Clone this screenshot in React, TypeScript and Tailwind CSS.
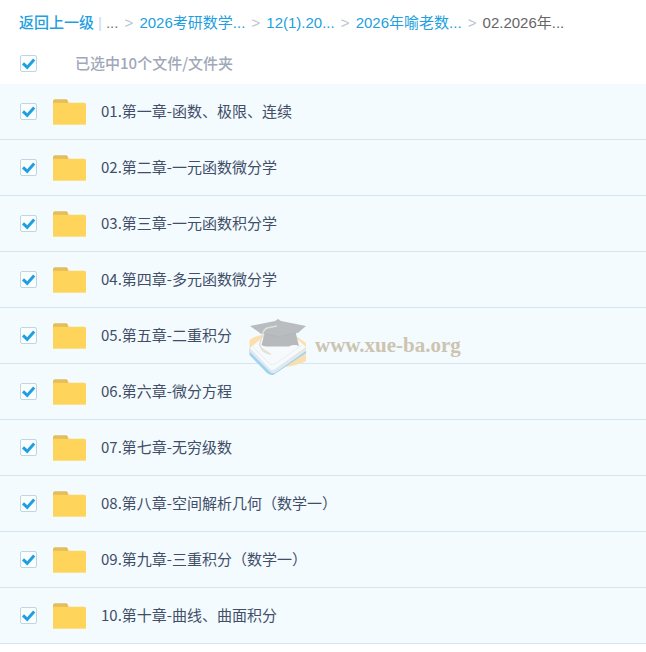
import { useState } from 'react'

const crumbs = ['2026考研数学...', '12(1).20...', '2026年喻老数...']

const folders = [
  '01.第一章-函数、极限、连续',
  '02.第二章-一元函数微分学',
  '03.第三章-一元函数积分学',
  '04.第四章-多元函数微分学',
  '05.第五章-二重积分',
  '06.第六章-微分方程',
  '07.第七章-无穷级数',
  '08.第八章-空间解析几何（数学一）',
  '09.第九章-三重积分（数学一）',
  '10.第十章-曲线、曲面积分',
]

type CheckboxProps = {
  id: string
  checked: boolean
  onChange: () => void
}

function Checkbox({ id, checked, onChange }: CheckboxProps) {
  return (
    <span className="grid h-[18px] w-[17px] shrink-0 place-items-center">
      <input
        id={id}
        type="checkbox"
        checked={checked}
        onChange={onChange}
        className="col-start-1 row-start-1 h-[17px] w-[17px] appearance-none rounded-xs border border-[#c3d5e3] bg-[#fbfeff]"
      />
      {checked && (
        <svg width="17" height="17" viewBox="0 0 17 17" fill="none" className="pointer-events-none col-start-1 row-start-1">
          <path d="M3 8.4 L7.2 12.4 L14.2 4.5" stroke="#1f9fe6" strokeWidth="3" />
        </svg>
      )}
    </span>
  )
}

function FolderIcon() {
  return (
    <svg width="33" height="27" viewBox="0 0 33 27" className="shrink-0">
      <path d="M0 3.2 Q0 1.2 2 1.2 H13 Q14.3 1.2 14.7 2.4 L15.4 4.8 V9 H0 Z" fill="#e3be5a" />
      <rect x="0" y="4.7" width="33" height="22.3" rx="1.6" fill="#ffd45b" />
      <path d="M0.3 26 Q0.7 27 2 27 H31 Q32.3 27 32.7 26 Z" fill="#fde08a" />
    </svg>
  )
}

// Graduation cap resting on a stack of books
function CapLogo() {
  return (
    <svg width="58" height="58" viewBox="0 0 58 58" className="shrink-0">
      <path d="M0.5 22 Q5 18 14 17 H45 L57 25 V43 Q48 48 35 49 L12 45 Q2 40 0.5 32 Z" fill="#fbdfae" />
      <path d="M0.5 31 L22 54 L57 32 V35 L25 56.5 Q22 58 18 55 L0.5 37 Z" fill="#9fd2ee" />
      <path d="M1 30 L21 50 Q23 52 26 50 L57 30 V33 L26 55 Q23 56 21 54 L1 34 Z" fill="#dfe9ef" />
      <path d="M1 30 L13 20 H47 L57 29 L26 51 Q23 53 21 51 Z" fill="#f6fafc" />
      <path d="M4 29 L21 46 Q23 48 26 46 L53 27" fill="none" stroke="#e3ebef" strokeWidth="0.8" />
      <path d="M16 14 L46 12 L50 28 Q45 26 40 28.5 H17 Q14 28 12.5 27 Z" fill="#b7babd" />
      <path d="M1 8 L26 3 L29 1 L32 3 L57 8 L50 14 L34 18 Q30 19 26 18 L11 15 Z" fill="#b9bdc0" />
      <path d="M11 15 L26 18 Q30 19 34 18 L50 14" fill="none" stroke="#afb3b7" strokeWidth="0.7" />
      <path d="M28 8 L18 10 Q14 12 13 18 L10.5 27 Q13 32 20 35" fill="none" stroke="#dfe0da" strokeWidth="1.4" />
      <path d="M12 30 Q14 35 22 36" fill="none" stroke="#e6e2d5" strokeWidth="1.5" />
    </svg>
  )
}

function Separator() {
  return <span className="w-[21px] shrink-0 text-center text-[#b9c4d0]">&gt;</span>
}

export default function App() {
  const [selected, setSelected] = useState<string[]>(folders)
  const allSelected = selected.length === folders.length

  function toggle(name: string) {
    setSelected((prev) => (prev.includes(name) ? prev.filter((n) => n !== name) : [...prev, name]))
  }

  return (
    <div className="relative min-h-screen bg-white text-[15px] leading-6 font-['Noto_Sans_CJK_SC',sans-serif]">
      <nav className="flex h-11 items-center overflow-hidden px-[19px] pt-0.5 whitespace-nowrap font-['Liberation_Sans','Noto_Sans_CJK_SC',sans-serif]">
        <a href="#" className="font-medium text-[#229fe0]">返回上一级</a>
        <span className="mx-1 text-[#c4d8ee]">|</span>
        <span className="text-[#777]">...</span>
        <Separator />
        {crumbs.map((crumb) => (
          <span key={crumb} className="flex">
            <a href="#" className="text-[#229fe0]">{crumb}</a>
            <Separator />
          </span>
        ))}
        <span className="text-[#666]">02.2026年...</span>
      </nav>

      <div className="flex h-10 items-center px-5 pb-0.5">
        <Checkbox id="all" checked={allSelected} onChange={() => setSelected(allSelected ? [] : folders)} />
        <label htmlFor="all" className="ml-[38px] font-medium text-[#a0a8b8]">
          已选中{selected.length}个文件/文件夹
        </label>
      </div>

      <ul>
        {folders.map((name, i) => (
          <li key={name} className="flex h-14 items-center border-b border-[#d5e6f1] bg-[#f3fbff] px-5">
            <Checkbox id={`folder-${i}`} checked={selected.includes(name)} onChange={() => toggle(name)} />
            <label htmlFor={`folder-${i}`} className="ml-4 flex items-center gap-[15px] text-[#424e67]">
              <FolderIcon />
              <span className="pb-0.5">{name}</span>
            </label>
          </li>
        ))}
      </ul>

      {/* Site watermark over the list */}
      <div className="pointer-events-none absolute top-[318px] left-[249px] flex items-center gap-2">
        <CapLogo />
        <span className="pb-1 font-['Liberation_Serif',serif] text-[21px] font-bold text-[#cdc4b0]">www.xue-ba.org</span>
      </div>
    </div>
  )
}
